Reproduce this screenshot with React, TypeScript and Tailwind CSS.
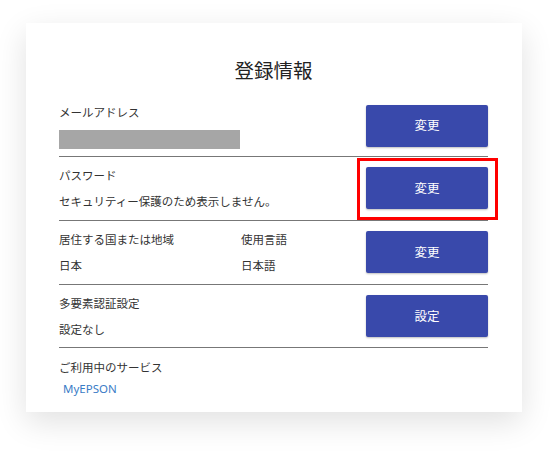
// 登録情報カード（アカウント設定の一覧）。パスワード行の「変更」ボタンに赤枠の強調あり。

const JP = "font-['Noto_Sans_CJK_JP','Noto_Sans',sans-serif]";

function ActionButton({ label }: { label: string }) {
  return (
    <button
      type="button"
      className="flex h-[42px] w-[122px] shrink-0 items-center justify-center rounded-[2px] bg-[#3949ab] text-[12.5px] text-white shadow-[0_1px_2px_rgba(0,0,0,0.25)]"
    >
      {label}
    </button>
  );
}

export default function App() {
  return (
    <div className={`h-[451px] w-[550px] overflow-hidden bg-white ${JP}`}>
      <div className="ml-[26px] mt-[23px] h-[389px] w-[496px] bg-white px-[34px] pl-[33px] shadow-[0_10px_30px_rgba(0,0,0,0.12)]">
        {/* タイトル */}
        <h1 className="pt-[33px] text-center text-[19.5px] leading-[28px] text-[#222]">
          登録情報
        </h1>

        {/* メールアドレス */}
        <div className="flex items-center justify-between border-b border-[#777] pb-[7px] pt-[18px] text-[11.5px] text-[#333]">
          <div>
            <p className="leading-[20px]">メールアドレス</p>
            <div className="mt-[8px] h-[19px] w-[181px] bg-[#a6a6a6]" />
          </div>
          <ActionButton label="変更" />
        </div>

        {/* パスワード */}
        <div className="relative flex items-center justify-between border-b border-[#777] pb-[9px] pt-[8px] text-[11.5px] text-[#333]">
          <div>
            <p className="leading-[20px]">パスワード</p>
            <p className="mt-[6px] leading-[20px]">
              セキュリティー保護のため表示しません。
            </p>
          </div>
          <ActionButton label="変更" />
          <div className="pointer-events-none absolute -right-[10px] bottom-0 top-[1px] w-[141px] border-[3px] border-[#ff0000]" />
        </div>

        {/* 居住国・使用言語 */}
        <div className="flex items-center justify-between border-b border-[#777] pb-[9px] pt-[8px] text-[11.5px] text-[#333]">
          <div className="grid grid-cols-[182px_auto] gap-y-[6px] leading-[20px]">
            <p>居住する国または地域</p>
            <p>使用言語</p>
            <p>日本</p>
            <p>日本語</p>
          </div>
          <ActionButton label="変更" />
        </div>

        {/* 多要素認証 */}
        <div className="flex items-center justify-between border-b border-[#777] pb-[8px] pt-[8px] text-[11.5px] text-[#333]">
          <div>
            <p className="leading-[20px]">多要素認証設定</p>
            <p className="mt-[6px] leading-[20px]">設定なし</p>
          </div>
          <ActionButton label="設定" />
        </div>

        {/* ご利用中のサービス */}
        <div className="pt-[9px] text-[11.5px] text-[#333]">
          <p className="leading-[20px]">ご利用中のサービス</p>
          <a className="ml-[4px] mt-[3px] block font-['Noto_Sans',sans-serif] text-[11.5px] leading-[18px] text-[#3a7cc6]">
            MyEPSON
          </a>
        </div>
      </div>
    </div>
  );
}
